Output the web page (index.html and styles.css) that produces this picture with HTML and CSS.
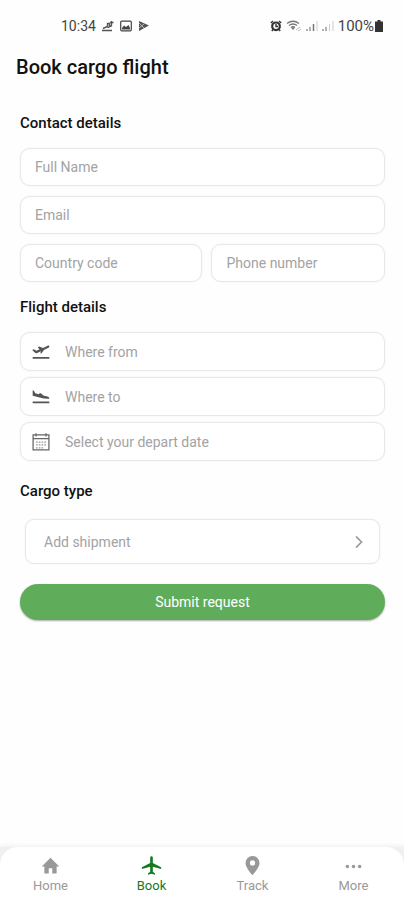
FILE: index.html
```html
<!DOCTYPE html>
<html lang="en">
<head>
<meta charset="utf-8">
<meta name="viewport" content="width=device-width, initial-scale=1">
<title>Book cargo flight</title>
<link rel="stylesheet" href="styles.css">
</head>
<body>
<div class="status">
  <div class="status-group">
    <span>10:34</span>
    <svg class="status-icon" viewBox="0 0 12 12" aria-hidden="true"><path d="M0 10.500h10M1 8.500l4-2 1 1 4-2M5.500 6V3.500h2V6M9.500 1v4M8 2.500h3.500" fill="none" stroke="#555" stroke-width="1.400"/></svg>
    <svg class="status-icon" viewBox="0 0 12 12" aria-hidden="true"><rect x=".7" y="1.200" width="10.600" height="9.600" rx="1" fill="none" stroke="#444" stroke-width="1.200"/><path d="M2 9.500V8l2-2.500L6 7l2.500-2L10 8v1.500z" fill="#444"/></svg>
    <svg class="status-icon" viewBox="0 0 12 12" aria-hidden="true"><path d="M1 1l10 4.500L1 11z" fill="#555"/><path d="M1 3l5 5M1 8l5-4" stroke="#ccc" stroke-width=".8"/></svg>
  </div>
  <div class="status-group status-right">
    <svg class="status-icon" viewBox="0 0 12 12" aria-hidden="true"><circle cx="6" cy="6.300" r="3.800" fill="#fff" stroke="#333" stroke-width="2.200"/><path d="M6 4v2.500h2M.8 3L3 1M11.200 3L9 1M3 9.500L1.800 11M9 9.500l1.200 1.500" fill="none" stroke="#333" stroke-width="1.400"/></svg>
    <svg class="wifi-icon" viewBox="0 0 16 12" aria-hidden="true"><path d="M1 3.500Q7 -1 13 3.500M3 5.500q4-3 8 0M5 7.500q2-1.500 4 0" fill="none" stroke="#777" stroke-width="1.300"/><path d="M5 7.500h4l-2 2.500z" fill="#777"/><path d="M10 10l4-3M12 11l3-2" stroke="#bbb"/></svg>
    <svg class="status-icon" viewBox="0 0 12 12" aria-hidden="true"><path d="M1 9v2M4 7v4" stroke="#999" stroke-width="1.500"/><path d="M7.500 4v7" stroke="#777" stroke-width="1.500"/><path d="M11 1v10" stroke="#ccc"/></svg>
    <svg class="status-icon" viewBox="0 0 12 12" aria-hidden="true"><path d="M1 9v2M4 7v4" stroke="#999" stroke-width="1.500"/><path d="M7.500 4v7M11 1v10" stroke="#ccc"/></svg>
    <div class="charge">
      <span>100%</span>
      <svg class="battery-icon" viewBox="0 0 8 12" aria-hidden="true"><path d="M2.500 0h3v1.500H8V12H0V1.500h2.500z" fill="#333"/></svg>
    </div>
  </div>
</div>

<main class="page">
  <h1 class="title">Book cargo flight</h1>
  <form class="form">
    <h2 class="heading">Contact details</h2>
    <div class="stack stack-wide">
      <input class="field" type="text" placeholder="Full Name" aria-label="Full Name">
      <input class="field" type="email" placeholder="Email" aria-label="Email">
      <div class="pair">
        <input class="field" type="text" placeholder="Country code" aria-label="Country code">
        <input class="field" type="tel" placeholder="Phone number" aria-label="Phone number">
      </div>
    </div>

    <h2 class="heading">Flight details</h2>
    <div class="stack">
      <label class="field icon-field">
        <svg class="field-icon" viewBox="0 0 24 24" aria-hidden="true"><path d="M2 18h20v2H2zM1.500 9.500l1.800-.7 3.200 1.700 3.800-1.700-2.300-2.600 1.800-.8 4.700 1.700 5.300-2.600c1.200-.5 2.400.1 2.200 1.300-.1.500-.5.900-1 1.100l-5.500 2.600-2.500 3.800-1.800.7.600-3-4.300 2.100c-1.200.5-2.300.3-3-.6z"/></svg>
        <input class="field-input" type="text" placeholder="Where from" aria-label="Where from">
      </label>
      <label class="field icon-field">
        <svg class="field-icon" viewBox="0 0 24 24" aria-hidden="true"><path d="M2 17.500h20v2H2zM2 10.500V4l1.500.5 1.500 3 4.500 1.200 1-1.500 1.800.5 2.500 2.600 5 1.200c1.200.4 2.200 1.100 2.200 2.500-4 .4-7-.2-10.500-1z"/></svg>
        <input class="field-input" type="text" placeholder="Where to" aria-label="Where to">
      </label>
      <label class="field icon-field">
        <svg class="field-icon" viewBox="0 0 24 24" aria-hidden="true"><path d="M2.500 3.500h19v18h-19zM2.500 8h19M6 1.500v4M18 1.500v4" fill="none" stroke="#666" stroke-width="1.500"/><path d="M6 12h12M6 15.500h12M6 19h9" fill="none" stroke="#999" stroke-width="1.500" stroke-dasharray="2 1.300"/></svg>
        <input class="field-input" type="text" placeholder="Select your depart date" aria-label="Select your depart date">
      </label>
    </div>

    <h2 class="heading heading-cargo">Cargo type</h2>
    <button class="shipment" type="button">
      <span>Add shipment</span>
      <svg class="chevron" viewBox="0 0 8 12" aria-hidden="true"><path d="M1 .5L6.500 6 1 11.500" fill="none" stroke="#999" stroke-width="1.700"/></svg>
    </button>
    <button class="submit" type="submit">Submit request</button>
  </form>
</main>

<footer class="dock">
  <nav class="tabs">
    <a class="tab" href="#home"><svg class="tab-icon" viewBox="0 0 24 24" aria-hidden="true"><path d="M10 21v-6h4v6h5v-8h3L12 3 2 13h3v8z"/></svg>Home</a>
    <a class="tab tab-active" href="#book" aria-current="page"><svg class="tab-icon" viewBox="0 0 24 24" aria-hidden="true"><path d="M23 16v-2l-9.500-5V3a1.500 1.500 0 0 0-3 0v6L1 14v2l9.500-2.500V19L8 21v1.500l4-1 4 1V21l-2.500-2v-5.500z"/></svg>Book</a>
    <a class="tab" href="#track"><svg class="tab-icon" viewBox="0 0 24 24" aria-hidden="true"><path fill-rule="evenodd" d="M12 1a8 8 0 0 0-8 8c0 5.500 8 14 8 14s8-8.500 8-14a8 8 0 0 0-8-8zm0 5a3 3 0 1 1 0 6 3 3 0 0 1 0-6z"/></svg>Track</a>
    <a class="tab" href="#more"><svg class="tab-icon" viewBox="0 0 24 24" aria-hidden="true"><circle cx="5" cy="13" r="2"/><circle cx="12" cy="13" r="2"/><circle cx="19" cy="13" r="2"/></svg>More</a>
  </nav>
</footer>
</body>
</html>
```
FILE: styles.css
```css
* {
  box-sizing: border-box;
}

body {
  margin: 0;
  min-height: 100vh;
  display: flex;
  flex-direction: column;
  background: #fefefe;
  color: #111;
  font-family: Roboto, "Liberation Sans", sans-serif;
  font-size: 14px;
}

svg {
  display: block;
  flex: none;
}

input,
button {
  font: inherit;
}

.status {
  display: flex;
  justify-content: space-between;
  padding: 16px 21px 0 61px;
  color: #444;
  line-height: 20px;
}

.status-group {
  display: flex;
  align-items: center;
  gap: 6px;
}

.status-right {
  gap: 4px;
}

.charge {
  display: flex;
  align-items: center;
  gap: 1px;
  font-size: 15px;
}

.status-icon {
  width: 12px;
  height: 12px;
}

.wifi-icon {
  width: 16px;
  height: 12px;
}

.battery-icon {
  width: 8px;
  height: 12px;
}

.page {
  flex: 1;
  padding: 18px 19px 24px 20px;
}

.title {
  margin: 0 0 33px -4px;
  font-size: 20px;
  font-weight: 500;
  line-height: 26px;
}

.form {
  display: flex;
  flex-direction: column;
}

.heading {
  margin: 0 0 15px;
  font-size: 15px;
  font-weight: 500;
  line-height: 20px;
}

.stack {
  display: flex;
  flex-direction: column;
  gap: 6px;
  margin-bottom: 20px;
}

.stack-wide {
  gap: 10px;
  margin-bottom: 15px;
}

.pair {
  display: grid;
  grid-template-columns: 183fr 174fr;
  gap: 9px;
}

.field {
  width: 100%;
  min-width: 0;
  height: 38px;
  padding: 0 14px;
  border: 1px solid #e8e8e8;
  border-radius: 10px;
  background: #fff;
  box-shadow: 0 0 2px #eee;
}

.icon-field {
  display: flex;
  align-items: center;
  gap: 14px;
  height: 39px;
  padding: 0 10px;
}

.field-icon {
  width: 20px;
  height: 20px;
  fill: #555;
}

.field-input {
  flex: 1;
  min-width: 0;
  padding: 0;
  border: 0;
  outline: 0;
  background: none;
}

::placeholder {
  color: #a3a3a3;
  opacity: 1;
}

.heading-cargo {
  margin-bottom: 18px;
}

.shipment {
  display: flex;
  align-items: center;
  justify-content: space-between;
  height: 45px;
  margin: 0 5px 20px;
  padding: 0 16px 0 18px;
  border: 1px solid #e8e8e8;
  border-radius: 9px;
  background: #fff;
  box-shadow: 0 0 2px #eee;
  color: #a3a3a3;
}

.chevron {
  width: 8px;
  height: 12px;
}

.submit {
  height: 36px;
  padding: 0;
  border: 0;
  border-radius: 18px;
  background: #5fad5b;
  box-shadow: 0 1px 2px #aaa;
  color: #fff;
}

.dock {
  background: #f0f0f0;
  box-shadow: 0 -1px 4px #eee;
}

.tabs {
  display: grid;
  grid-template-columns: repeat(4, 1fr);
  height: 53px;
  border-radius: 18px 18px 0 0;
  background: #fff;
}

.tab {
  display: flex;
  flex-direction: column;
  align-items: center;
  gap: 1px;
  padding-top: 8px;
  color: #999;
  font-size: 13px;
  line-height: 18px;
  text-decoration: none;
}

.tab-icon {
  width: 21px;
  height: 21px;
  fill: currentColor;
}

.tab-active {
  color: #16791f;
}
```
